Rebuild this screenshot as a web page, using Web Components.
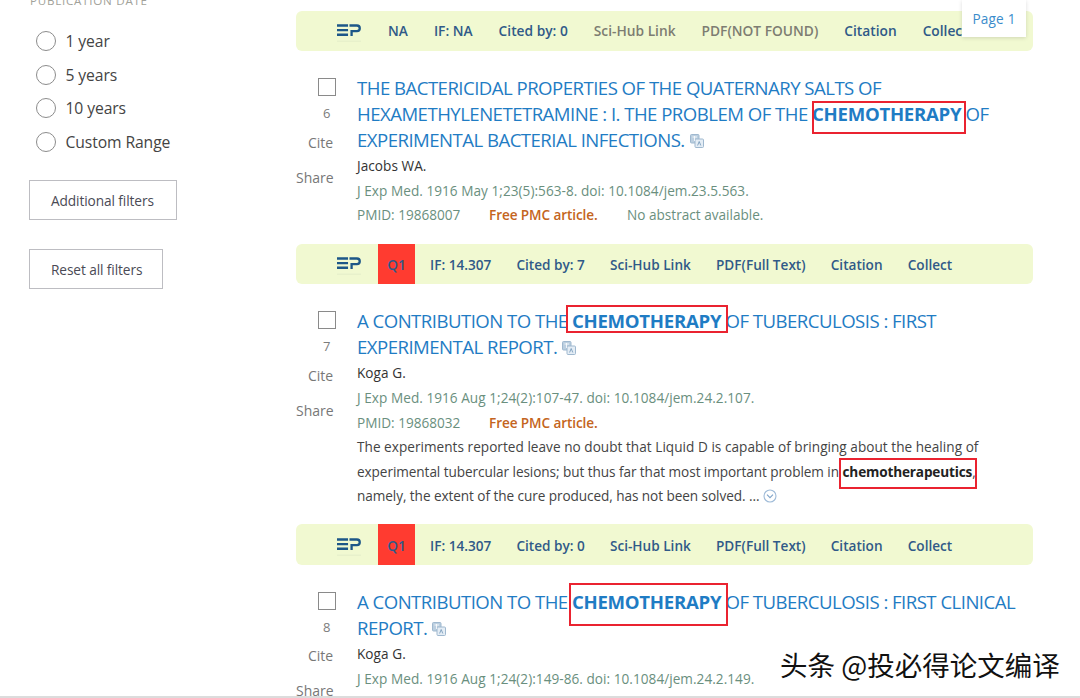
<!DOCTYPE html>
<html><head><meta charset="utf-8"><style>
html,body{margin:0;padding:0;background:#fff;font-family:"Open Sans","Noto Sans","Noto Sans CJK SC",sans-serif;}
</style></head><body>
<pm-page>
  <pm-sidebar slot="side"></pm-sidebar>
  <pm-bar wide qtext="NA" impact="NA" cited="0" sci="off" pdf="PDF(NOT FOUND)" pdfoff></pm-bar>
  <pm-article num="6">
    <span slot="title">THE BACTERICIDAL PROPERTIES OF THE QUATERNARY SALTS OF<br>HEXAMETHYLENETETRAMINE : I. THE PROBLEM OF THE <pm-hit style="--l:0px;--r:5px;--t:0px;--b:-8px;letter-spacing:-.28px"><b>CHEMOTHERAPY</b></pm-hit> OF<br>EXPERIMENTAL BACTERIAL INFECTIONS.</span>
    <span slot="authors">Jacobs WA.</span>
    <span slot="cit">J Exp Med. 1916 May 1;23(5):563-8. doi: 10.1084/jem.23.5.563.</span>
    <span slot="pmid">19868007</span>
    <span slot="note">No abstract available.</span>
  </pm-article>
  <pm-bar q="Q1" impact="14.307" cited="7" pdf="PDF(Full Text)"></pm-bar>
  <pm-article num="7">
    <span slot="title">A CONTRIBUTION TO THE <pm-hit style="--l:6px;--r:7px;--t:-3px;--b:0px;letter-spacing:-.28px"><b>CHEMOTHERAPY</b></pm-hit> OF TUBERCULOSIS : FIRST<br>EXPERIMENTAL REPORT.</span>
    <span slot="authors">Koga G.</span>
    <span slot="cit">J Exp Med. 1916 Aug 1;24(2):107-47. doi: 10.1084/jem.24.2.107.</span>
    <span slot="pmid">19868032</span>
    <span slot="abs">The experiments reported leave no doubt that Liquid D is capable of bringing about the healing of<br><span style="letter-spacing:-.07px">experimental tubercular lesions; but thus far that most important problem in</span> <pm-hit style="--l:4px;--r:5px;--t:-4px;--b:-8px;letter-spacing:-.16px;color:#222"><b>chemotherapeutics</b></pm-hit>,<br><span style="letter-spacing:-.07px">namely, the extent of the cure produced, has not been solved. ...</span> <pm-expand></pm-expand></span>
  </pm-article>
  <pm-bar q="Q1" impact="14.307" cited="0" pdf="PDF(Full Text)"></pm-bar>
  <pm-article num="8">
    <span slot="title">A CONTRIBUTION TO THE <pm-hit style="--l:3px;--r:7px;--t:-6px;--b:-12px;letter-spacing:-.28px"><b>CHEMOTHERAPY</b></pm-hit> OF TUBERCULOSIS : FIRST CLINICAL<br>REPORT.</span>
    <span slot="authors">Koga G.</span>
    <span slot="cit">J Exp Med. 1916 Aug 1;24(2):149-86. doi: 10.1084/jem.24.2.149.</span>
  </pm-article>
</pm-page>
<script>
function def(name, html){
  customElements.define(name, class extends HTMLElement{
    connectedCallback(){
      if(this.shadowRoot) return;
      const r=this.attachShadow({mode:'open'});
      r.innerHTML = typeof html==='function'?html(this):html;
    }
  });
}
const LINK='#1f7cc4';
def('pm-page',`<style>
:host{display:flex;flex-direction:column;width:1080px;height:698px;overflow:hidden;position:relative;background:#fff}
.top{display:grid;grid-template-columns:296px 737px;height:696px;overflow:hidden;padding-top:10.5px;box-sizing:border-box}
.side{margin-top:-10.5px}
.line{height:2px;background:#dcdcdc;flex:none}
.tag{position:absolute;left:962px;top:0;width:64px;height:37px;background:#fff;box-shadow:0 1px 4px rgba(0,0,0,.14);color:#3a8ccb;font-size:13.6px;display:flex;align-items:center;justify-content:center;letter-spacing:.2px}
.wm{position:absolute;left:780px;top:645px;font:27.5px/38px "Noto Sans CJK SC",sans-serif;color:#111;white-space:nowrap;text-shadow:1px 1px 0 #fff,-1px 0 0 #fff}
</style>
<div class="top"><div class="side"><slot name="side"></slot></div><div class="main"><slot></slot></div></div>
<div class="line"></div>
<div class="tag">Page 1</div>
<div class="wm">头条 @投必得论文编译</div>`);

def('pm-radio',`<style>
:host{display:flex;align-items:center;height:33.5px;color:#444;font-size:15.7px;letter-spacing:-.1px}
i{display:block;width:18px;height:18px;border:1.5px solid #8c8c8c;border-radius:50%;margin:0 10px 0 6.5px;flex:none}
</style><i></i><slot></slot>`);

def('pm-btn',`<style>
:host{display:block}
div{border:1px solid #bdbdc2;height:38px;display:flex;align-items:center;padding:0 0 0 21px;color:#4a4a55;font-size:13.7px;letter-spacing:-.1px;white-space:nowrap}
</style><div><slot></slot></div>`);

def('pm-sidebar',`<style>
:host{display:block;padding-left:29px}
.h{font-size:11.6px;line-height:14px;margin-top:-6px;color:#a2a29a;letter-spacing:.75px;padding-left:1px}
.list{margin-top:16.5px;padding-bottom:21.5px}
.a{width:148px}
.b{width:134px;margin-top:29px}
</style>
<div class="h">PUBLICATION DATE</div>
<div class="list"><pm-radio>1 year</pm-radio><pm-radio>5 years</pm-radio><pm-radio>10 years</pm-radio><pm-radio>Custom Range</pm-radio></div>
<pm-btn class="a">Additional filters</pm-btn><pm-btn class="b">Reset all filters</pm-btn>`);

const logo=`<svg width="25" height="20" viewBox="0 0 25 20" style="display:block"><g fill="none" stroke="#1d5788" stroke-width="2.4"><path d="M0 2.2H11.5M0 7H11.5M0 11.8H11.5"/><path d="M13 2.2H20.8a2.9 2.9 0 0 1 0 5.8H15.2V13"/></g><path d="M0 18.5H25" stroke="#e3ecc9" stroke-width="1"/></svg>`;
def('pm-bar',h=>{
  const q=h.getAttribute('q'), off=h.getAttribute('sci')==='off', pd=h.hasAttribute('pdfoff'), wide=h.hasAttribute('wide');
  return `<style>
:host{display:flex;align-items:stretch;height:40.5px;background:#f1f9d1;border-radius:6px;padding-left:41px;font-size:${wide?13.75:13.6}px;font-weight:600;color:#305a88;box-sizing:border-box;white-space:nowrap}
.logo{width:24px;display:flex;align-items:center;margin-right:17px;padding-top:5px}
.i{display:flex;align-items:center;padding:${wide?0:'1px'} 10px 0;margin-right:${wide?6:5.2}px}
.q{background:#ff3b30;padding:1px 9.5px 0;margin-right:5px;width:18px;justify-content:center}
.off{color:#7d7d72}
</style>
<div class="logo">${logo}</div>
${q?`<div class="i q">${q}</div>`:`<div class="i">${h.getAttribute('qtext')}</div>`}
<div class="i">IF: ${h.getAttribute('impact')}</div>
<div class="i">Cited by: ${h.getAttribute('cited')}</div>
<div class="i ${off?'off':''}">Sci-Hub Link</div>
<div class="i ${pd?'off':''}">${h.getAttribute('pdf')}</div>
<div class="i">Citation</div>
<div class="i">Collect</div>`;
});

def('pm-hit',`<style>
:host{display:inline;position:relative}
.box{position:absolute;left:calc(var(--l)*-1);right:calc(var(--r)*-1);top:var(--t);bottom:var(--b);border:2px solid #ea2330;pointer-events:none}
</style><slot></slot><span class="box"></span>`);

def('pm-expand',`<style>:host{display:inline-block;vertical-align:-2px}</style><svg width="14" height="14" viewBox="0 0 14 14" style="display:block"><circle cx="7" cy="7" r="6" fill="none" stroke="#9fbbd8" stroke-width="1.1"/><path d="M4 5.6L7 8.6L10 5.6" fill="none" stroke="#7fa3c8" stroke-width="1.1"/></svg>`);

const tr=`<svg class="tr" width="14" height="14" viewBox="0 0 14 14"><rect x=".5" y=".5" width="8.5" height="8.5" rx="1" fill="#bccfe0" stroke="#9fb8cf"/><rect x="5" y="5" width="8.5" height="8.5" rx="1" fill="#e4edf5" stroke="#9fb8cf"/><path d="M2.5 3H7M4.5 2V7" stroke="#fff" stroke-width=".8"/><path d="M7.6 11.5l1.6-4 1.6 4" fill="none" stroke="#6f93b5" stroke-width=".8"/></svg>`;
def('pm-article',h=>{
  const hasPmid=h.querySelector('[slot=pmid]'), abs=h.querySelector('[slot=abs]');
  return `<style>
:host{display:grid;grid-template-columns:61px 1fr;padding-top:24px;padding-bottom:16px;box-sizing:border-box}
.l{display:flex;flex-direction:column;align-items:flex-start;color:#777;font-size:14px;position:relative}
.cb{width:16px;height:16px;border:1.5px solid #8a8a8a;margin:3px 0 0 22px}
.n{margin:7px 0 0 27px;line-height:20px;font-size:13px;color:#7c7c7c}
.c{margin:9.5px 0 0 12px;line-height:20px}
.s{margin:15px 0 0 0;line-height:20px}
.t{font-size:18.6px;line-height:26px;color:${LINK};letter-spacing:-.53px;white-space:nowrap}
.tr{display:inline-block;vertical-align:-1px;margin-left:5px}
.a,.cit,.p,.abs{line-height:24.4px;font-size:13.6px;white-space:nowrap}
.a{color:#333;letter-spacing:.05px;margin-top:1px}
.cit{color:#6a8f7e;letter-spacing:.04px;margin-top:.5px}
.p{color:#6a8f7e;display:flex}
.p .id{width:132px}
.p b{color:#c46420;font-weight:600;width:138px;letter-spacing:-.1px}
.abs{color:#444;letter-spacing:.03px;margin-top:.3px}
</style>
<div class="l"><div class="cb"></div><div class="n">${h.getAttribute('num')}</div><div class="c">Cite</div><div class="s">Share</div></div>
<div>
<div class="t"><slot name="title"></slot>${tr}</div>
<div class="a"><slot name="authors"></slot></div>
<div class="cit"><slot name="cit"></slot></div>
${hasPmid?`<div class="p"><span class="id">PMID: <slot name="pmid"></slot></span><b>Free PMC article.</b><span><slot name="note"></slot></span></div>`:''}
${abs?`<div class="abs"><slot name="abs"></slot></div>`:''}
</div>`;
});
</script>
</body></html>
